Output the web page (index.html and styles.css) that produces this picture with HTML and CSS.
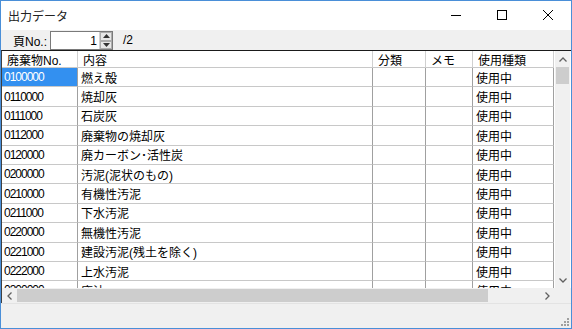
FILE: index.html
```html
<!DOCTYPE html>
<html lang="ja">
<head>
    <meta charset="UTF-8">
    <title>出力データ</title>
    <link rel="stylesheet" href="styles.css">
</head>
<body>
    <div class="window">
        <div class="titlebar">
            <span class="title">出力データ</span>
            <div class="controls">
                <svg class="ctl" width="46" height="29" viewBox="0 0 46 29"><path d="M18 14.5h10" stroke="#000" stroke-width="1"/></svg>
                <svg class="ctl" width="46" height="29" viewBox="0 0 46 29"><rect x="18.5" y="9.5" width="9" height="9" fill="none" stroke="#000" stroke-width="1"/></svg>
                <svg class="ctl" width="46" height="29" viewBox="0 0 46 29"><path d="M18 9l10 10M28 9l-10 10" stroke="#000" stroke-width="1"/></svg>
            </div>
        </div>

        <div class="toolbar">
            <span class="page-label">頁No.:</span>
            <div class="spin">
                <span class="spin-value">1</span>
                <div class="spin-buttons">
                    <span class="spin-btn"><svg width="7" height="4" viewBox="0 0 7 4"><path d="M0 4L3.5 0L7 4z" fill="#333"/></svg></span>
                    <span class="spin-btn"><svg width="7" height="4" viewBox="0 0 7 4"><path d="M0 0L3.5 4L7 0z" fill="#333"/></svg></span>
                </div>
            </div>
            <span class="page-total">/2</span>
        </div>

        <div class="grid-frame">
            <div class="grid-main">
                <div class="grid-view">
                    <div class="grid-row grid-header">
                        <div class="cell">廃棄物No.</div>
                        <div class="cell">内容</div>
                        <div class="cell">分類</div>
                        <div class="cell">メモ</div>
                        <div class="cell">使用種類</div>
                    </div>
                    <div class="grid-row">
                        <div class="cell code selected">0100000</div>
                        <div class="cell">燃え殻</div>
                        <div class="cell"></div>
                        <div class="cell"></div>
                        <div class="cell">使用中</div>
                    </div>
                    <div class="grid-row">
                        <div class="cell code">0110000</div>
                        <div class="cell">焼却灰</div>
                        <div class="cell"></div>
                        <div class="cell"></div>
                        <div class="cell">使用中</div>
                    </div>
                    <div class="grid-row">
                        <div class="cell code">0111000</div>
                        <div class="cell">石炭灰</div>
                        <div class="cell"></div>
                        <div class="cell"></div>
                        <div class="cell">使用中</div>
                    </div>
                    <div class="grid-row">
                        <div class="cell code">0112000</div>
                        <div class="cell">廃棄物の焼却灰</div>
                        <div class="cell"></div>
                        <div class="cell"></div>
                        <div class="cell">使用中</div>
                    </div>
                    <div class="grid-row">
                        <div class="cell code">0120000</div>
                        <div class="cell">廃カーボン･活性炭</div>
                        <div class="cell"></div>
                        <div class="cell"></div>
                        <div class="cell">使用中</div>
                    </div>
                    <div class="grid-row">
                        <div class="cell code">0200000</div>
                        <div class="cell">汚泥(泥状のもの)</div>
                        <div class="cell"></div>
                        <div class="cell"></div>
                        <div class="cell">使用中</div>
                    </div>
                    <div class="grid-row">
                        <div class="cell code">0210000</div>
                        <div class="cell">有機性汚泥</div>
                        <div class="cell"></div>
                        <div class="cell"></div>
                        <div class="cell">使用中</div>
                    </div>
                    <div class="grid-row">
                        <div class="cell code">0211000</div>
                        <div class="cell">下水汚泥</div>
                        <div class="cell"></div>
                        <div class="cell"></div>
                        <div class="cell">使用中</div>
                    </div>
                    <div class="grid-row">
                        <div class="cell code">0220000</div>
                        <div class="cell">無機性汚泥</div>
                        <div class="cell"></div>
                        <div class="cell"></div>
                        <div class="cell">使用中</div>
                    </div>
                    <div class="grid-row">
                        <div class="cell code">0221000</div>
                        <div class="cell">建設汚泥(残土を除く)</div>
                        <div class="cell"></div>
                        <div class="cell"></div>
                        <div class="cell">使用中</div>
                    </div>
                    <div class="grid-row">
                        <div class="cell code">0222000</div>
                        <div class="cell">上水汚泥</div>
                        <div class="cell"></div>
                        <div class="cell"></div>
                        <div class="cell">使用中</div>
                    </div>
                    <div class="grid-row">
                        <div class="cell code">0300000</div>
                        <div class="cell">廃油</div>
                        <div class="cell"></div>
                        <div class="cell"></div>
                        <div class="cell">使用中</div>
                    </div>
                </div>
                <div class="vscroll">
                    <span class="sb-btn"><svg width="8" height="5" viewBox="0 0 8 5"><path d="M0.5 4.5L4 1L7.5 4.5" fill="none" stroke="#606060" stroke-width="1.3"/></svg></span>
                    <span class="vthumb"></span>
                    <span class="sb-fill"></span>
                    <span class="sb-btn"><svg width="8" height="5" viewBox="0 0 8 5"><path d="M0.5 0.5L4 4L7.5 0.5" fill="none" stroke="#606060" stroke-width="1.3"/></svg></span>
                </div>
            </div>
            <div class="hscroll-row">
                <div class="hscroll">
                    <span class="sb-btn"><svg width="5" height="8" viewBox="0 0 5 8"><path d="M4.5 0.5L1 4L4.5 7.5" fill="none" stroke="#606060" stroke-width="1.3"/></svg></span>
                    <span class="hthumb"></span>
                    <span class="sb-fill"></span>
                    <span class="sb-btn"><svg width="5" height="8" viewBox="0 0 5 8"><path d="M0.5 0.5L4 4L0.5 7.5" fill="none" stroke="#606060" stroke-width="1.3"/></svg></span>
                </div>
                <div class="corner"></div>
            </div>
        </div>

        <div class="statusbar">
            <svg class="grip" width="8" height="8" viewBox="0 0 8 8">
                <rect x="6" y="0" width="2" height="2" fill="#a0a0a0"/>
                <rect x="3" y="3" width="2" height="2" fill="#a0a0a0"/>
                <rect x="6" y="3" width="2" height="2" fill="#a0a0a0"/>
                <rect x="0" y="6" width="2" height="2" fill="#a0a0a0"/>
                <rect x="3" y="6" width="2" height="2" fill="#a0a0a0"/>
                <rect x="6" y="6" width="2" height="2" fill="#a0a0a0"/>
            </svg>
        </div>
    </div>
</body>
</html>
```

FILE: styles.css
```css
* {
    margin: 0;
    padding: 0;
    box-sizing: border-box;
}

body {
    font-family: 'Liberation Sans', 'Noto Sans CJK JP', sans-serif;
    font-size: 12px;
    color: #000;
    background-color: #fff;
}

.window {
    width: 572px;
    height: 329px;
    border: 1px solid #4a8fd8;
    display: flex;
    flex-direction: column;
    overflow: hidden;
}

.titlebar {
    height: 29px;
    background-color: #fff;
    display: flex;
    align-items: center;
    justify-content: space-between;
}

.title {
    padding-left: 7px;
    color: #222;
    font-size: 12px;
}

.controls {
    display: flex;
}

.ctl {
    display: block;
}

/* barra de paginas */
.toolbar {
    height: 20px;
    background-color: #f0f0f0;
    display: flex;
    align-items: center;
    padding-left: 12px;
}

.page-label {
    width: 37px;
}

.spin {
    width: 63px;
    height: 19px;
    margin-top: 1px;
    background-color: #fff;
    border: 1px solid #7a7a7a;
    display: flex;
    align-items: center;
}

.spin-value {
    flex: 1;
    text-align: right;
    padding-right: 2px;
}

.spin-buttons {
    width: 13px;
    height: 17px;
    display: flex;
    flex-direction: column;
    border-left: 1px solid #d0d0d0;
}

.spin-btn {
    flex: 1;
    display: flex;
    align-items: center;
    justify-content: center;
    background-color: #e8e8e8;
    border: 1px solid #adadad;
}

.page-total {
    padding-left: 10px;
}

/* grade */
.grid-frame {
    height: 253px;
    border-top: 1px solid #1a1a1a;
    border-left: 1px solid #404040;
    display: flex;
    flex-direction: column;
}

.grid-main {
    height: 237px;
    display: flex;
    overflow: hidden;
}

.grid-view {
    width: 553px;
    background-color: #fff;
    overflow: hidden;
}

.grid-row {
    display: grid;
    grid-template-columns: 76px 295px 53px 47px 81px;
    height: 19.4px;
}

.grid-header {
    height: 17px;
}

.cell {
    border-right: 1px solid #a0a0a0;
    border-bottom: 1px solid #c8c8c8;
    padding-left: 3px;
    display: flex;
    align-items: center;
    white-space: nowrap;
    overflow: hidden;
}

.grid-header .cell {
    border-right-color: #d0d0d0;
    border-bottom-color: #c8c8c8;
    padding-left: 5px;
}

.cell.code {
    font-size: 12px;
    letter-spacing: -1px;
    padding-left: 2px;
}

.cell.selected {
    background-color: #3390f0;
    color: #fff;
}

/* barras de rolagem */
.vscroll {
    width: 15px;
    background-color: #f0f0f0;
    display: flex;
    flex-direction: column;
}

.sb-btn {
    width: 15px;
    height: 16px;
    display: flex;
    align-items: center;
    justify-content: center;
    flex-shrink: 0;
}

.vthumb {
    height: 17px;
    margin: 0 1px;
    background-color: #cdcdcd;
}

.sb-fill {
    flex: 1;
}

.hscroll-row {
    height: 15px;
    display: flex;
}

.hscroll {
    width: 553px;
    display: flex;
    background-color: #f0f0f0;
}

.hscroll .sb-btn {
    height: 15px;
}

.hthumb {
    width: 471px;
    margin: 1px 0;
    background-color: #cdcdcd;
}

.corner {
    flex: 1;
    background-color: #f0f0f0;
}

.statusbar {
    flex: 1;
    background-color: #f0f0f0;
    border-top: 1px solid #e3e3e3;
    display: flex;
    justify-content: flex-end;
    align-items: flex-end;
    padding: 0 2px 2px 0;
}

.grip {
    display: block;
}
```
